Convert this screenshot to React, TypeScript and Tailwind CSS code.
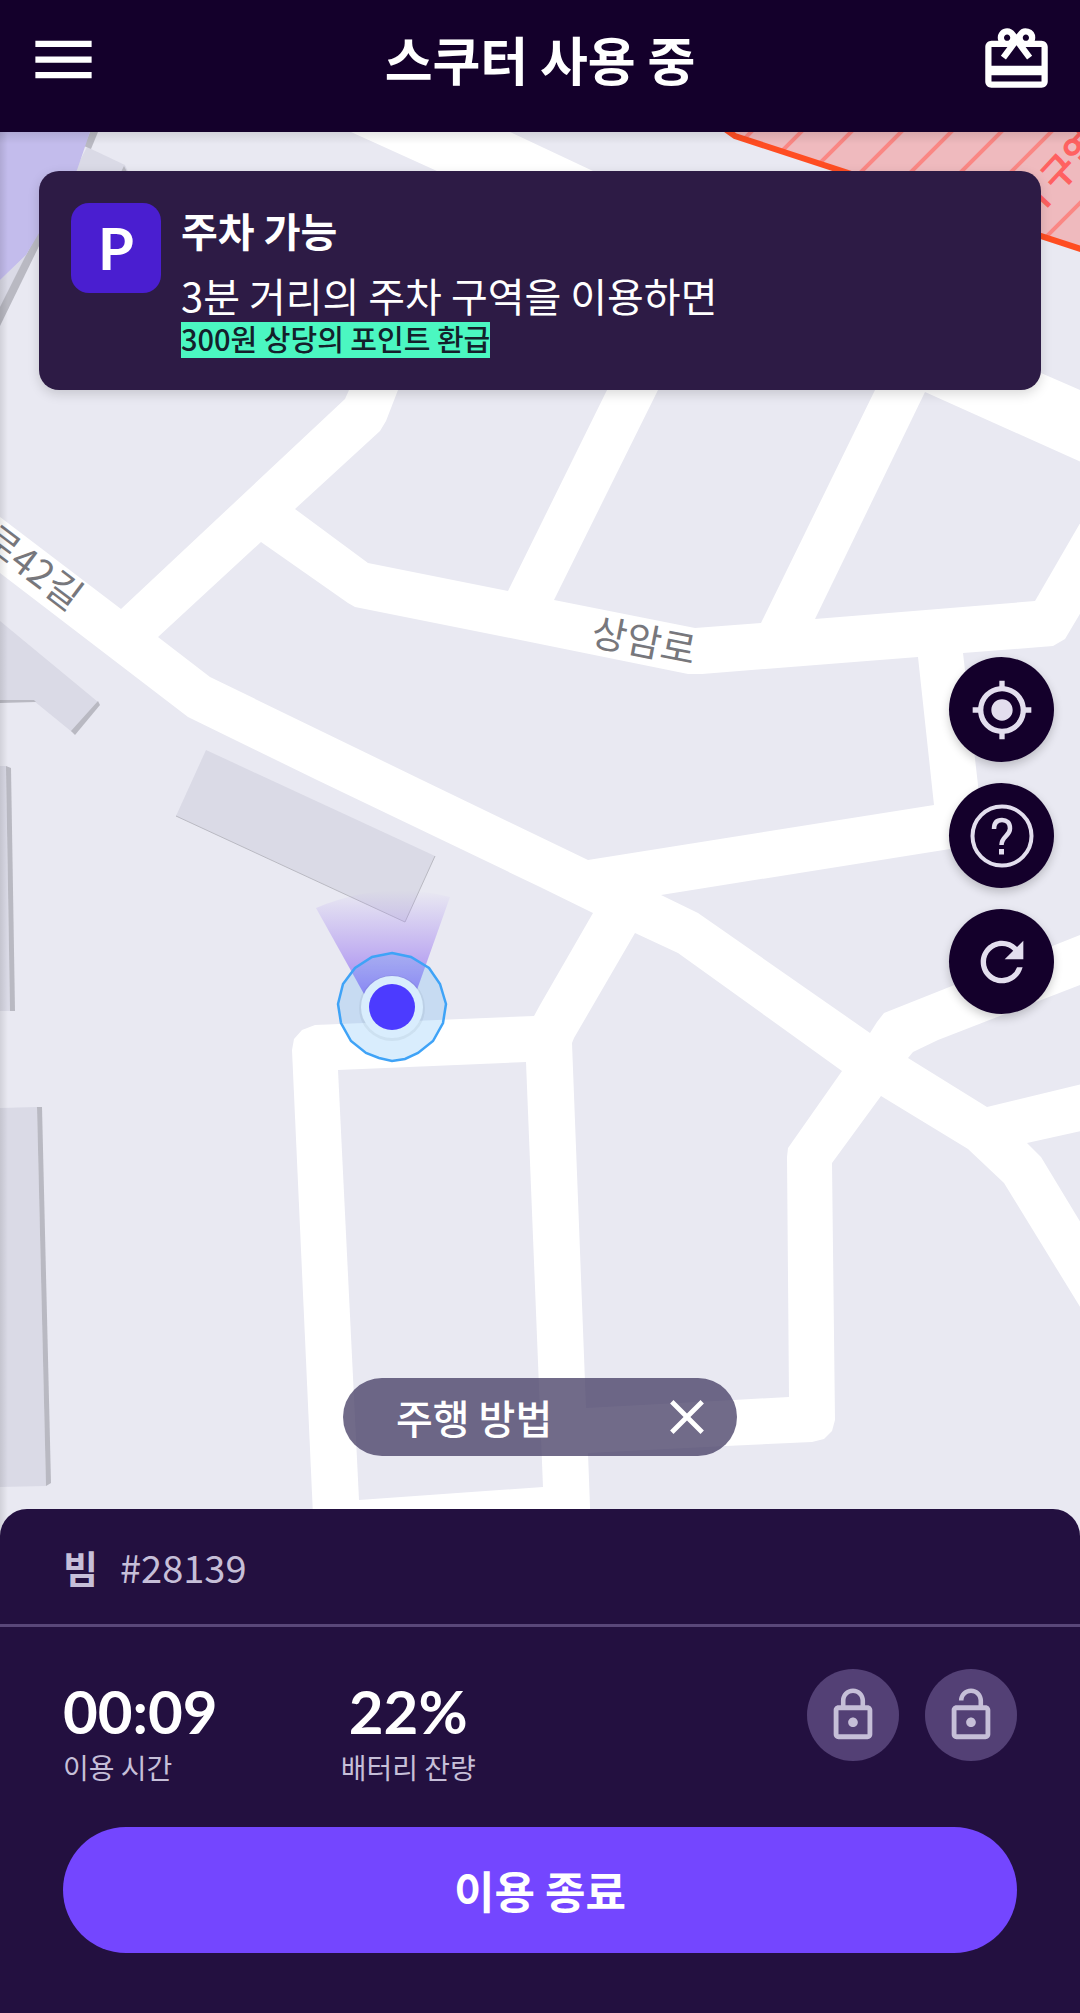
import { useState } from "react";
import {
  MdClose,
  MdLockOpen,
  MdLockOutline,
  MdMenu,
  MdMyLocation,
  MdRedeem,
  MdRefresh,
} from "react-icons/md";

const blocks = [
  "0,120 325,120 351,132 437,171 437,200 349,390 345,399 121,609 0,517",
  "510,132 593,171 1041,373 1080,390 1090,394 1090,120 484,120",
  "410,350 627,350 607,390 508,591 368,563 295,509 380,431 386,421 398,390",
  "678,350 658,390 554,600 695,628 761,623 875,390 895,350",
  "925,392 815,619 1035,601 1090,506 1090,466",
  "261,542 348,603 355,607 540,644 688,674 702,674 918,657 934,805 588,860 422,780 210,677 158,637",
  "963,653 1053,646 1065,639 1090,597 1090,931 884,1013 877,1022 870,1033 698,913 661,895 950,849 977,840 981,825 978,785",
  "1090,981 938,1040 913,1052 908,1058 987,1107 1090,1082",
  "1090,1129 1027,1143 1041,1157 1090,1238",
  "635,933 678,953 799,1040 842,1071 788,1148 787,1157 789,1397 734,1400 586,1408 572,1043 574,1038",
  "881,1096 968,1149 1004,1183 1090,1323 1090,1560 592,1560 588,1453 726,1446 812,1442 824,1439 832,1431 835,1420 832,1163",
  "338,1070 526,1062 543,1487 359,1500",
  "-10,565 0,573 188,717 317,780 540,887 593,913 540,1005 534,1016 315,1025 302,1030 294,1039 292,1050 315,1560 -10,1560",
];

const buildings = [
  "0,621 98,702 72,732 34,701 0,701",
  "206,750 435,856 405,922 176,816",
  "0,766 6,766 10,1011 0,1011",
  "0,1108 37,1107 46,1486 0,1487",
  "87,147 125,165 132,180 70,180",
  "0,280 26,255 0,310",
];

const buildingEdges = [
  "0,700 34,700 36,702 0,703",
  "98,701 100,705 75,735 71,731",
  "6,766 11,768 15,1011 10,1011",
  "37,1107 42,1107 51,1483 46,1486",
  "90,132 98,132 91,149 84,146",
  "121,172 124,166 127,172",
  "42,225 42,240 0,326 0,307 26,255",
];

const noParkingHatch = [883, 933, 983, 1033, 1083, 1133, 1183, 1283];

function CityMap() {
  return (
    <svg
      className="absolute inset-0 w-full h-full"
      viewBox="0 132 1080 1405"
      preserveAspectRatio="xMidYMin slice"
      role="img"
      aria-label="지도"
    >
      <defs>
        <linearGradient id="heading" x1="0" y1="0" x2="0" y2="1">
          <stop offset="0" stopColor="#a88bf0" stopOpacity="0" />
          <stop offset="0.5" stopColor="#a88bf0" stopOpacity="0.55" />
          <stop offset="1" stopColor="#8868f5" stopOpacity="0.9" />
        </linearGradient>
        <clipPath id="noParking">
          <polygon points="710,120 735,138 1090,253 1090,120" />
        </clipPath>
      </defs>

      <rect x="-10" y="120" width="1100" height="1450" fill="#ffffff" />
      {blocks.map((points) => (
        <polygon key={points} points={points} fill="#e9e9f2" />
      ))}

      {buildings.map((points) => (
        <polygon key={points} points={points} fill="#dadae6" />
      ))}
      {buildingEdges.map((points) => (
        <polygon key={points} points={points} fill="#b9b9c2" />
      ))}
      <polyline points="435,856 405,922 176,816" fill="none" stroke="#b9b9c2" strokeWidth="1" />
      <polygon points="0,120 94,120 90,132 77,170 42,228 26,255 0,280" fill="#c3bcec" />

      <g clipPath="url(#noParking)">
        <rect x="700" y="120" width="400" height="140" fill="#efbabe" />
        {noParkingHatch.map((c) => (
          <line key={c} x1={c - 120} y1="120" x2={c - 270} y2="270" stroke="#fa8784" strokeWidth="4" />
        ))}
      </g>
      <polyline points="718,124 735,136 1090,252" fill="none" stroke="#ff4d22" strokeWidth="6" />
      <text
        transform="translate(1059 172) rotate(-47)"
        x="-91"
        y="13"
        fontSize="36"
        className="font-bold"
        fill="#ff6161"
      >
        금지 구역
      </text>

      <g fill="#77777c" fontSize="38" textAnchor="middle">
        <text transform="translate(644 641) rotate(11)" y="14">
          상암로
        </text>
        <text transform="translate(33 567) rotate(37)" y="14">
          로42길
        </text>
      </g>

      <path d="M316 908Q383 880 450 897L413 1001L369 1003Z" fill="url(#heading)" />
      <circle cx="392" cy="1008" r="33" fill="#000000" fillOpacity="0.06" />
      <circle cx="392" cy="1007" r="31" fill="#ffffff" />
      <polygon
        points="392,953 411,957 429,968 440,984 446,1004 443,1023 433,1041 418,1053 405,1059 392,1061 379,1058 366,1053 351,1041 341,1023 338,1004 343,984 355,968 372,957"
        fill="#3fa3f7"
        fillOpacity="0.2"
        stroke="#3fa3f7"
        strokeWidth="2.5"
      />
      <circle cx="392" cy="1007" r="23" fill="#4c3bff" />
    </svg>
  );
}

function HelpIcon() {
  return (
    <svg className="w-16 h-16" viewBox="0 0 64 64" fill="none" stroke="currentColor" aria-hidden="true">
      <circle cx="32" cy="32" r="29.5" strokeWidth="4" />
      <path
        d="M24 25C24 18.500 27.500 16 32 16S40 18.500 40 24.500C40 32 31.500 32.500 31.500 41"
        strokeWidth="4.500"
      />
      <path d="M31.500 45V50.500" strokeWidth="5" />
    </svg>
  );
}

const fabClass =
  "w-[105px] h-[105px] rounded-full grid place-items-center bg-[#14002b] text-[#e3deee] shadow-[0_4px_10px_rgba(0,0,0,0.2)]";
const lockClass =
  "w-[92px] h-[92px] rounded-full grid place-items-center bg-[#534075] text-[#c6bfd8]";

export default function App() {
  const [guideOpen, setGuideOpen] = useState(true);

  return (
    <div className="min-h-screen flex flex-col bg-[#231040] text-white font-['Noto_Sans_CJK_KR',sans-serif]">
      <header className="h-[132px] shrink-0 px-[26px] pb-3.5 flex items-center justify-between bg-[#14002b]">
        <button aria-label="메뉴">
          <MdMenu size={75} />
        </button>
        <h1 className="text-[52px] leading-[72px] font-bold">스쿠터 사용 중</h1>
        <button aria-label="선물">
          <MdRedeem size={75} />
        </button>
      </header>

      <main className="relative flex-1 flex flex-col pb-[81px]">
        <CityMap />
        <div className="absolute inset-x-0 top-0 h-3 bg-gradient-to-b from-black/10 to-transparent" />
        <div className="absolute inset-y-0 left-0 w-2 bg-gradient-to-r from-black/10 to-transparent" />

        <section className="relative m-[39px] mb-0 p-8 flex items-start gap-5 rounded-[20px] bg-[#2d1b45] shadow-[0_4px_12px_rgba(0,0,0,0.15)]">
          <div className="w-[90px] h-[90px] shrink-0 rounded-[18px] grid place-items-center bg-[#4a1ed0] font-['Lato',sans-serif] text-[58px] leading-[90px] font-bold">
            P
          </div>
          <div>
            <h2 className="text-[40px] leading-[54px] font-bold">주차 가능</h2>
            <p className="mt-[14px] text-[40px] leading-[48px]">3분 거리의 주차 구역을 이용하면</p>
            <p className="mt-[3px] pb-1 w-fit bg-[#4bf7c1] text-[#14202b] text-[29px] leading-[32px] font-medium">
              300원 상당의 포인트 환급
            </p>
          </div>
        </section>

        <div className="relative self-end mt-[267px] mr-[26px] flex flex-col gap-[21px]">
          <button className={fabClass} aria-label="현재 위치">
            <MdMyLocation size={64} />
          </button>
          <button className={fabClass} aria-label="도움말">
            <HelpIcon />
          </button>
          <button className={fabClass} aria-label="새로고침">
            <MdRefresh size={64} />
          </button>
        </div>

        {guideOpen && (
          <div className="relative self-center mt-auto w-[394px] h-[78px] pl-[53px] pr-[21px] flex items-center justify-between rounded-full bg-[#413961]/75">
            <button className="text-[40px] leading-[60px] font-medium">주행 방법</button>
            <button onClick={() => setGuideOpen(false)} aria-label="닫기">
              <MdClose size={58} />
            </button>
          </div>
        )}
      </main>

      <section className="relative -mt-7 shrink-0 rounded-t-[27px] bg-[#231040] pb-[60px]">
        <div className="h-[118px] px-[63px] flex items-center gap-[22px] border-b-[3px] border-[#594779] text-[38px] leading-[60px] text-[#c6bfd8]">
          <strong className="font-bold">빔</strong>
          <span>#28139</span>
        </div>

        <div className="px-[63px] pt-[42px]">
          <div className="flex items-start">
            <dl className="flex gap-[123px]">
              <div className="flex flex-col-reverse">
                <dt className="text-[28px] leading-[28px] text-[#c6bfd8]">이용 시간</dt>
                <dd className="font-['Lato',sans-serif] text-[60px] leading-[84px] font-bold">00:09</dd>
              </div>
              <div className="flex flex-col-reverse text-center">
                <dt className="text-[28px] leading-[28px] text-[#c6bfd8]">배터리 잔량</dt>
                <dd className="font-['Lato',sans-serif] text-[60px] leading-[84px] font-bold">22%</dd>
              </div>
            </dl>
            <div className="ml-auto flex gap-[26px]">
              <button className={lockClass} aria-label="잠금">
                <MdLockOutline size={58} />
              </button>
              <button className={lockClass} aria-label="잠금 해제">
                <MdLockOpen size={58} />
              </button>
            </div>
          </div>
          <button className="mt-[46px] w-full h-[126px] rounded-full bg-[#7446ff] text-[44px] leading-[60px] font-bold">
            이용 종료
          </button>
        </div>
      </section>
    </div>
  );
}
